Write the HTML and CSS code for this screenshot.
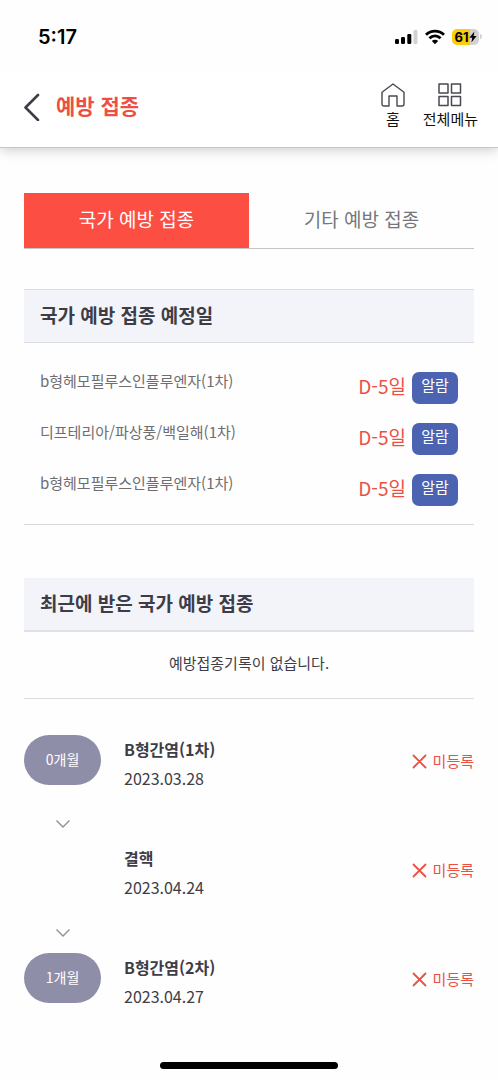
FILE: index.html
```html
<!DOCTYPE html>
<html lang="ko">
<head>
<meta charset="utf-8">
<meta name="viewport" content="width=device-width, initial-scale=1">
<title>예방 접종</title>
<link rel="stylesheet" href="styles.css">
</head>
<body>
<div class="page">
  <div class="status-bar">
    <time class="clock">5:17</time>
    <div class="status-icons">
      <svg class="signal" width="24" height="16" viewBox="0 0 24 16" aria-hidden="true">
        <rect x="0" y="10" width="4" height="5" rx="1.3"/>
        <rect x="6" y="8" width="4" height="7" rx="1.3"/>
        <rect x="12.300" y="5" width="4" height="10" rx="1.3"/>
        <rect x="18.500" y="1" width="4" height="14" rx="1.3" fill="#d2d2d2"/>
      </svg>
      <svg class="wifi" width="20" height="16" viewBox="0 0 20 16" aria-hidden="true">
        <g fill="none" stroke="#000" stroke-width="2.900">
          <path d="M1 5.800C6.200.900 13.800.900 19 5.800"/>
          <path d="M4.400 9.300c3.300-3 7.900-3 11.200 0"/>
        </g>
        <path d="M6.800 11.900c1.900-1.600 4.500-1.600 6.400 0L10 15.200z"/>
      </svg>
      <div class="battery">
        <span class="battery-level">61</span>
        <svg width="8" height="12" viewBox="0 0 8 12" aria-hidden="true"><path d="M5.400.5.400 6.700h2.900L2.400 11.500l5.200-6.400H4.600z"/></svg>
      </div>
    </div>
  </div>

  <header class="app-header">
    <button class="back" type="button" aria-label="뒤로">
      <svg width="16" height="28" viewBox="0 0 16 28" aria-hidden="true"><path d="M14 2 1.500 14.500 14 27" fill="none" stroke="#3e3d47" stroke-width="2.600" stroke-linecap="round" stroke-linejoin="round"/></svg>
    </button>
    <h1 class="title">예방 접종</h1>
    <nav class="shortcuts">
      <a class="shortcut" href="#home">
        <svg width="24" height="24" viewBox="0 0 24 24" aria-hidden="true"><path d="M1 9.200 12 1l11 8.200V21q0 2-2 2h-5V13H8v10H3q-2 0-2-2z" fill="none" stroke="#4a4852" stroke-width="1.400" stroke-linejoin="round"/></svg>
        <span>홈</span>
      </a>
      <a class="shortcut" href="#menu">
        <svg width="24" height="24" viewBox="0 0 24 24" aria-hidden="true"><path d="M1 1h9v9H1zM13.500 1h9v9h-9zM1 13.500h9v9H1zM13.500 13.500h9v9h-9z" fill="none" stroke="#4a4852" stroke-width="1.500" stroke-linejoin="round"/></svg>
        <span>전체메뉴</span>
      </a>
    </nav>
  </header>

  <main class="content">
    <div class="tabs" role="tablist">
      <button class="tab tab-active" type="button" role="tab" aria-selected="true">국가 예방 접종</button>
      <button class="tab" type="button" role="tab" aria-selected="false">기타 예방 접종</button>
    </div>

    <section class="upcoming">
      <h2 class="section-title section-title-ruled">국가 예방 접종 예정일</h2>
      <ul class="due-list">
        <li class="due"><span class="due-name">b형헤모필루스인플루엔자(1차)</span><span class="due-day">D-5일</span><button class="alarm" type="button">알람</button></li>
        <li class="due"><span class="due-name">디프테리아/파상풍/백일해(1차)</span><span class="due-day">D-5일</span><button class="alarm" type="button">알람</button></li>
        <li class="due"><span class="due-name">b형헤모필루스인플루엔자(1차)</span><span class="due-day">D-5일</span><button class="alarm" type="button">알람</button></li>
      </ul>
    </section>

    <section class="recent">
      <h2 class="section-title">최근에 받은 국가 예방 접종</h2>
      <p class="empty">예방접종기록이 없습니다.</p>
    </section>

    <ol class="timeline">
      <li class="entry">
        <span class="age">0개월</span>
        <div class="vaccine"><h3 class="vaccine-name">B형간염(1차)</h3><time class="vaccine-date">2023.03.28</time></div>
        <span class="state"><svg width="15" height="15" viewBox="0 0 15 15" aria-hidden="true"><path d="m1.500 1.500 12 12m0-12-12 12"/></svg>미등록</span>
        <svg class="chevron" width="16" height="10" viewBox="0 0 16 10" aria-hidden="true"><path d="m1.500 1.500 6.500 6.500 6.500-6.500"/></svg>
      </li>
      <li class="entry">
        <div class="vaccine"><h3 class="vaccine-name">결핵</h3><time class="vaccine-date">2023.04.24</time></div>
        <span class="state"><svg width="15" height="15" viewBox="0 0 15 15" aria-hidden="true"><path d="m1.500 1.500 12 12m0-12-12 12"/></svg>미등록</span>
        <svg class="chevron" width="16" height="10" viewBox="0 0 16 10" aria-hidden="true"><path d="m1.500 1.500 6.500 6.500 6.500-6.500"/></svg>
      </li>
      <li class="entry">
        <span class="age">1개월</span>
        <div class="vaccine"><h3 class="vaccine-name">B형간염(2차)</h3><time class="vaccine-date">2023.04.27</time></div>
        <span class="state"><svg width="15" height="15" viewBox="0 0 15 15" aria-hidden="true"><path d="m1.500 1.500 12 12m0-12-12 12"/></svg>미등록</span>
      </li>
    </ol>
  </main>
  <div class="home-indicator"></div>
</div>
</body>
</html>
```
FILE: styles.css
```css
* { box-sizing: border-box; }

body {
  margin: 0;
  background: #fefefe;
  color: #3e3d47;
  font-family: "Noto Sans CJK KR", sans-serif;
  font-size: 15px;
  line-height: 24px;
}

h1, h2, h3, p, ul, ol { margin: 0; padding: 0; }
ul, ol { list-style: none; }
button { border: 0; padding: 0; background: none; font: inherit; color: inherit; }
a { color: inherit; text-decoration: none; }
svg { display: block; flex: none; }

.page {
  display: flex;
  flex-direction: column;
  min-height: 100vh;
  padding-bottom: 11px;
}

/* Status bar */
.status-bar {
  display: flex;
  align-items: center;
  justify-content: space-between;
  height: 74px;
  padding: 0 19px 0 38px;
  color: #000;
}
.clock { font: 600 20px/24px Inter, sans-serif; }
.status-icons { display: flex; align-items: center; gap: 6px; }
.battery {
  position: relative;
  display: flex;
  align-items: center;
  justify-content: center;
  width: 27px;
  height: 16px;
  margin-left: 1px;
  border-radius: 5px;
  background: linear-gradient(90deg, #fccd0b 66%, #d3d3d3 66%);
}
.battery::after {
  content: "";
  position: absolute;
  left: 28px;
  top: 5px;
  width: 2px;
  height: 5px;
  border-radius: 0 2px 2px 0;
  background: #d3d3d3;
}
.battery-level { font: 700 13px/16px Inter, sans-serif; }

/* Header */
.app-header {
  display: flex;
  align-items: center;
  height: 74px;
  padding: 0 20px 8px 24px;
  background: #fff;
  border-bottom: 1px solid #c6c6c6;
  box-shadow: 0 2px 12px rgba(0, 0, 0, 0.2);
  clip-path: inset(0 0 -24px 0);
}
.back { display: flex; margin-right: 16px; }
.title { flex: 1; padding-bottom: 3px; font-size: 21px; font-weight: 700; line-height: 32px; color: #ec5044; }
.shortcuts { display: flex; gap: 18px; }
.shortcut {
  display: flex;
  flex-direction: column;
  align-items: center;
  color: #111;
}

/* Tabs */
.content { flex: 1; padding: 45px 24px 0; }
.tabs {
  display: grid;
  grid-template-columns: 1fr 1fr;
  border-bottom: 1px solid #c4c4c4;
}
.tab { height: 55px; padding-bottom: 3px; font-size: 19px; color: #77767b; }
.tab-active { background: #fc4e43; color: #fff; }

/* Sections */
.section-title {
  padding: 11px 16px 13px;
  border-bottom: 2px solid #e0e1e6;
  background: #f3f4f9;
  font-size: 19px;
  font-weight: 700;
  line-height: 28px;
}
.section-title-ruled { border-top: 1px solid #d9dce1; border-bottom: 1px solid #d9dce1; }
.upcoming { margin-top: 40px; }
.due-list {
  display: flex;
  flex-direction: column;
  gap: 19px;
  padding: 29px 16px 18px;
  border-bottom: 1px solid #d9d9db;
}
.due { display: flex; align-items: flex-start; }
.due-name { flex: 1; line-height: 18px; color: #6e6d72; }
.due-day { margin-right: 6px; font-size: 19px; line-height: 28px; color: #ec5044; }
.alarm {
  width: 46px;
  height: 32px;
  padding-bottom: 7px;
  border-radius: 7px;
  background: #4b63b1;
  color: #fff;
}

.recent { margin-top: 53px; }
.empty {
  padding: 19px 0 23px;
  border-bottom: 1px solid #dcdcde;
  text-align: center;
}

/* Timeline */
.timeline { margin-top: 36px; }
.entry {
  display: grid;
  grid-template-columns: 77px 1fr auto;
  column-gap: 23px;
}
.age {
  grid-column: 1;
  height: 50px;
  border-radius: 25px;
  background: #8f8ea9;
  color: #fff;
  font-size: 14px;
  line-height: 48px;
  text-align: center;
}
.vaccine { grid-column: 2; padding-bottom: 2px; }
.vaccine-name { font-size: 16px; font-weight: 700; line-height: 28px; }
.vaccine-date { display: block; font-size: 16px; line-height: 30px; }
.state {
  grid-column: 3;
  display: flex;
  align-items: center;
  gap: 6px;
  height: 52px;
  color: #ec5044;
}
.state svg { fill: none; stroke: currentColor; stroke-width: 1.800; stroke-linecap: round; }
.chevron {
  grid-column: 1;
  justify-self: center;
  margin: 24px 0 15px;
  fill: none;
  stroke: #909095;
  stroke-width: 1.400;
}

.home-indicator {
  width: 178px;
  height: 7px;
  margin: 0 auto;
  border-radius: 4px;
  background: #000;
}
```
